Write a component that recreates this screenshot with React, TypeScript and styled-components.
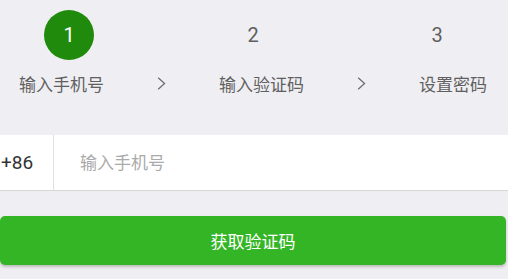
import styled, { createGlobalStyle } from "styled-components";

const GlobalStyle = createGlobalStyle`
  html, body {
    margin: 0;
    padding: 0;
    background-color: #efeff3;
    font-family: Roboto, "Noto Sans CJK SC", sans-serif;
  }
`;

const Page = styled.div`
  width: 508px;
  height: 279px;
  overflow: hidden;
  background-color: #efeff3;
`;

const NumberRow = styled.div`
  display: grid;
  grid-template-columns: repeat(3, 50px);
  column-gap: 134px;
  padding: 10px 0 0 44px;
`;

const StepNum = styled.div<{ $active?: boolean }>`
  width: 50px;
  height: 50px;
  border-radius: 50%;
  display: flex;
  align-items: center;
  justify-content: center;
  font-size: 20px;
  color: ${(p) => (p.$active ? "#ffffff" : "#5f5f5f")};
  background-color: ${(p) => (p.$active ? "#208a0c" : "transparent")};
`;

const LabelRow = styled.div`
  display: flex;
  align-items: center;
  gap: 53px;
  height: 24px;
  margin-top: 11px;
  padding-left: 19px;
`;

const StepLabel = styled.span`
  font-size: 17px;
  color: #606060;
  white-space: nowrap;
`;

const Chevron = styled.svg`
  width: 9px;
  height: 13px;
  flex: none;
`;

const InputRow = styled.div`
  display: flex;
  align-items: stretch;
  height: 55px;
  margin-top: 40px;
  background-color: #ffffff;
  border-bottom: 1px solid #d6d6d6;
`;

const CountryCode = styled.div`
  width: 54px;
  display: flex;
  align-items: center;
  padding-left: 1px;
  box-sizing: border-box;
  border-right: 1px solid #e0e0e0;
  font-size: 19px;
  color: #333333;
`;

const PhoneInput = styled.input`
  flex: 1;
  border: none;
  outline: none;
  background: transparent;
  padding: 0 0 0 26px;
  font-family: Roboto, "Noto Sans CJK SC", sans-serif;
  font-size: 17px;
  color: #333333;

  &::placeholder {
    color: #aaaaaa;
  }
`;

const SubmitButton = styled.button`
  display: flex;
  align-items: center;
  justify-content: center;
  width: 506px;
  height: 49px;
  margin-top: 25px;
  border: none;
  border-radius: 5px;
  background-color: #34b526;
  box-shadow: 0 2px 3px rgba(0, 0, 0, 0.22);
  color: #ffffff;
  font-family: Roboto, "Noto Sans CJK SC", sans-serif;
  font-size: 17px;
  padding: 0;
`;

function Arrow() {
  return (
    <Chevron viewBox="0 0 9 13">
      <path d="M1.2 0.8 L7.6 6.5 L1.2 12.2" fill="none" stroke="#6a6a6a" strokeWidth="1.2" />
    </Chevron>
  );
}

export default function App() {
  return (
    <Page>
      <GlobalStyle />
      <NumberRow>
        <StepNum $active>1</StepNum>
        <StepNum>2</StepNum>
        <StepNum>3</StepNum>
      </NumberRow>
      <LabelRow>
        <StepLabel>输入手机号</StepLabel>
        <Arrow />
        <StepLabel>输入验证码</StepLabel>
        <Arrow />
        <StepLabel>设置密码</StepLabel>
      </LabelRow>
      <InputRow>
        <CountryCode>+86</CountryCode>
        <PhoneInput placeholder="输入手机号" />
      </InputRow>
      <SubmitButton>获取验证码</SubmitButton>
    </Page>
  );
}
